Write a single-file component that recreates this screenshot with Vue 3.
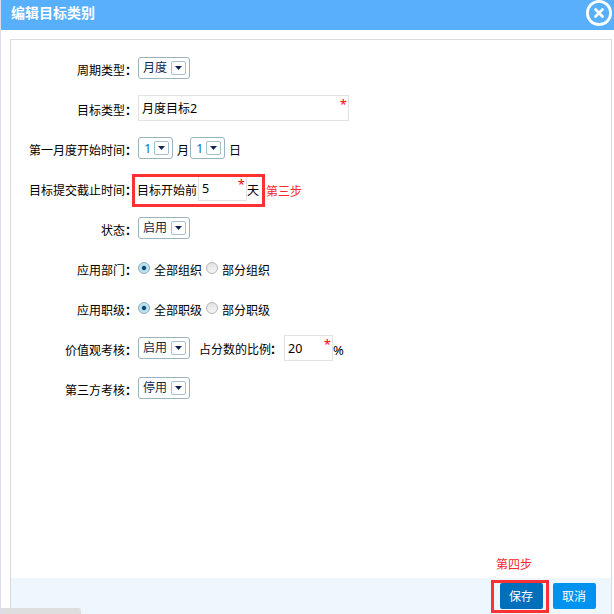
<script setup>
import { h } from 'vue'

const DropDown = (props) =>
  h('span', { class: 'select' }, [
    h('span', { class: 'select-text' }, props.value),
    h('span', { class: 'select-btn' }, [
      h('svg', { width: 7, height: 4, viewBox: '0 0 7 4' }, [
        h('path', { d: 'M0 0H7L3.5 4Z', fill: '#14284f' }),
      ]),
    ]),
  ])
DropDown.props = ['value']

const radios = [
  { label: '应用部门', options: ['全部组织', '部分组织'] },
  { label: '应用职级', options: ['全部职级', '部分职级'] },
]
</script>

<template>
  <div class="dialog">
    <header class="header">
      <span class="title">编辑目标类别</span>
      <svg class="close" width="26" height="26" viewBox="0 0 26 26">
        <circle cx="13" cy="13" r="11.6" fill="none" stroke="#fff" stroke-width="2.8" />
        <path d="M9.5 9.5L16.5 16.5M16.5 9.5L9.5 16.5" stroke="#fff" stroke-width="2.7" stroke-linecap="round" />
      </svg>
    </header>
    <main class="panel">
      <div class="form">
        <div class="row">
          <label class="label">周期类型<b class="colon">：</b></label>
          <DropDown value="月度" />
        </div>
        <div class="row">
          <label class="label">目标类型<b class="colon">：</b></label>
          <span class="input wide">月度目标<span class="num">2</span><i class="star">*</i></span>
        </div>
        <div class="row">
          <label class="label">第一月度开始时间<b class="colon">：</b></label>
          <DropDown value="1" class="digit" />
          <span class="txt month">月</span>
          <DropDown value="1" class="digit" />
          <span class="txt day">日</span>
        </div>
        <div class="row">
          <label class="label">目标提交截止时间<b class="colon">：</b></label>
          <span class="deadline">
            <span class="txt before">目标开始前</span>
            <span class="input narrow num">5<i class="star">*</i></span>
            <span class="txt">天</span>
            <span class="mark"></span>
          </span>
          <span class="note step3">第三步</span>
        </div>
        <div class="row">
          <label class="label">状态<b class="colon">：</b></label>
          <DropDown value="启用" />
        </div>
        <div v-for="r in radios" :key="r.label" class="row">
          <label class="label">{{ r.label }}<b class="colon">：</b></label>
          <template v-for="(o, i) in r.options" :key="o">
            <span class="radio" :class="{ on: i === 0 }"></span>
            <span class="txt option">{{ o }}</span>
          </template>
        </div>
        <div class="row">
          <label class="label">价值观考核<b class="colon">：</b></label>
          <DropDown value="启用" />
          <span class="ratio">占分数的比例<b class="colon">：</b></span>
          <span class="input narrow num">20<i class="star">*</i></span>
          <span class="percent">%</span>
        </div>
        <div class="row">
          <label class="label">第三方考核<b class="colon">：</b></label>
          <DropDown value="停用" />
        </div>
      </div>
      <div class="note step4">第四步</div>
      <footer class="footer">
        <span class="save-wrap"><button class="btn save">保存</button></span>
        <button class="btn cancel">取消</button>
      </footer>
    </main>
    <div class="status"></div>
  </div>
</template>

<style>
body {
  margin: 0;
  overflow: hidden;
}
</style>

<style scoped>
.dialog {
  position: relative;
  box-sizing: border-box;
  width: 614px;
  height: 614px;
  overflow: hidden;
  display: flex;
  flex-direction: column;
  border-left: 1px solid #dcdcec;
  background: #fff;
  color: #000;
  font: 12px/16px "Noto Sans", "Noto Sans CJK SC", sans-serif;
  white-space: nowrap;
}
.header {
  flex: none;
  display: flex;
  justify-content: space-between;
  height: 30px;
  padding: 0 2px 0 10px;
  background: #58b0fc;
}
.title {
  color: #fff;
  font-size: 14px;
  font-weight: 700;
  line-height: 25px;
}
.panel {
  flex: 1;
  box-sizing: border-box;
  display: flex;
  flex-direction: column;
  margin: 9px 2px 0 9px;
  border: 1px solid #d9dbdc;
  border-bottom: 0;
}
.form {
  flex: 1;
  padding-top: 8px;
}
.row {
  display: flex;
  align-items: center;
  height: 40px;
}
.label {
  width: 126px;
  margin-right: 1px;
  padding-top: 6px;
  text-align: right;
}
.colon {
  display: inline-block;
  width: 12px;
  text-indent: -1px;
}
.txt {
  padding-top: 6px;
}
.row :deep(.select) {
  box-sizing: border-box;
  display: flex;
  justify-content: space-between;
  width: 52px;
  height: 22px;
  padding: 3px 3px 0 4px;
  border: 1px solid #98b5bf;
  border-radius: 3px;
  color: #14284f;
}
.row :deep(.select-text) {
  line-height: 14px;
}
.row :deep(.select-btn) {
  box-sizing: border-box;
  display: flex;
  align-items: center;
  justify-content: center;
  width: 15px;
  height: 14px;
  border: 1px solid #a6c0c9;
  border-radius: 2px;
}
.row :deep(.digit) {
  width: 35px;
  padding-left: 5px;
  color: #1676b8;
  font-size: 13px;
}
.month {
  padding-left: 4px;
  margin-right: 1px;
}
.day {
  padding-left: 4px;
}
.input {
  position: relative;
  box-sizing: border-box;
  height: 26px;
  padding-left: 3px;
  border: 1px solid #e2e2e2;
  line-height: 25px;
}
.num {
  font-size: 12.5px;
}
.wide {
  width: 211px;
}
.narrow {
  width: 49px;
}
.star {
  position: absolute;
  top: 0;
  right: 1px;
  color: #f00;
  font-style: normal;
  font-size: 13px;
  line-height: 16px;
}
.deadline {
  position: relative;
  display: flex;
  align-items: center;
}
.before {
  margin: 0 1px 0 -1px;
}
.mark {
  position: absolute;
  left: -6px;
  top: -1px;
  box-sizing: border-box;
  width: 133px;
  height: 33px;
  border: 3px solid #fb3136;
}
.note {
  color: #f8282c;
}
.step3 {
  padding: 8px 0 0 7px;
}
.radio {
  box-sizing: border-box;
  width: 12px;
  height: 12px;
  border: 1px solid #b4b4b4;
  border-radius: 50%;
  background: linear-gradient(#e2e2e2, #f6f6f6);
}
.radio.on {
  border-color: #8fa9b8;
  background: radial-gradient(circle, #174a68 0 1.8px, #b4e0f3 2.6px, #c8e9f7);
}
.option {
  padding-left: 4px;
  margin-right: 4px;
}
.ratio {
  padding: 3px 1px 0 9px;
}
.percent {
  padding-top: 3px;
  font-size: 13px;
}
.step4 {
  padding: 0 0 5px 485px;
}
.footer {
  flex: none;
  display: flex;
  height: 36px;
  padding-left: 480px;
  background: #eef7fd;
}
.save-wrap {
  box-sizing: border-box;
  width: 58px;
  height: 33px;
  margin-top: 2px;
  padding-left: 6px;
  border: 3px solid #fb3136;
}
.btn {
  display: block;
  width: 43px;
  height: 26px;
  padding: 2px 1px 0 0;
  border: 0;
  border-radius: 2px;
  color: #fff;
  font: inherit;
}
.save {
  background: #0070bc;
}
.cancel {
  margin: 5px 0 0 4px;
  background: #0092ef;
}
.status {
  position: absolute;
  left: -1px;
  bottom: 0;
  width: 81px;
  height: 6px;
  border-radius: 0 3px 0 0;
  background: #dedede;
}
</style>
